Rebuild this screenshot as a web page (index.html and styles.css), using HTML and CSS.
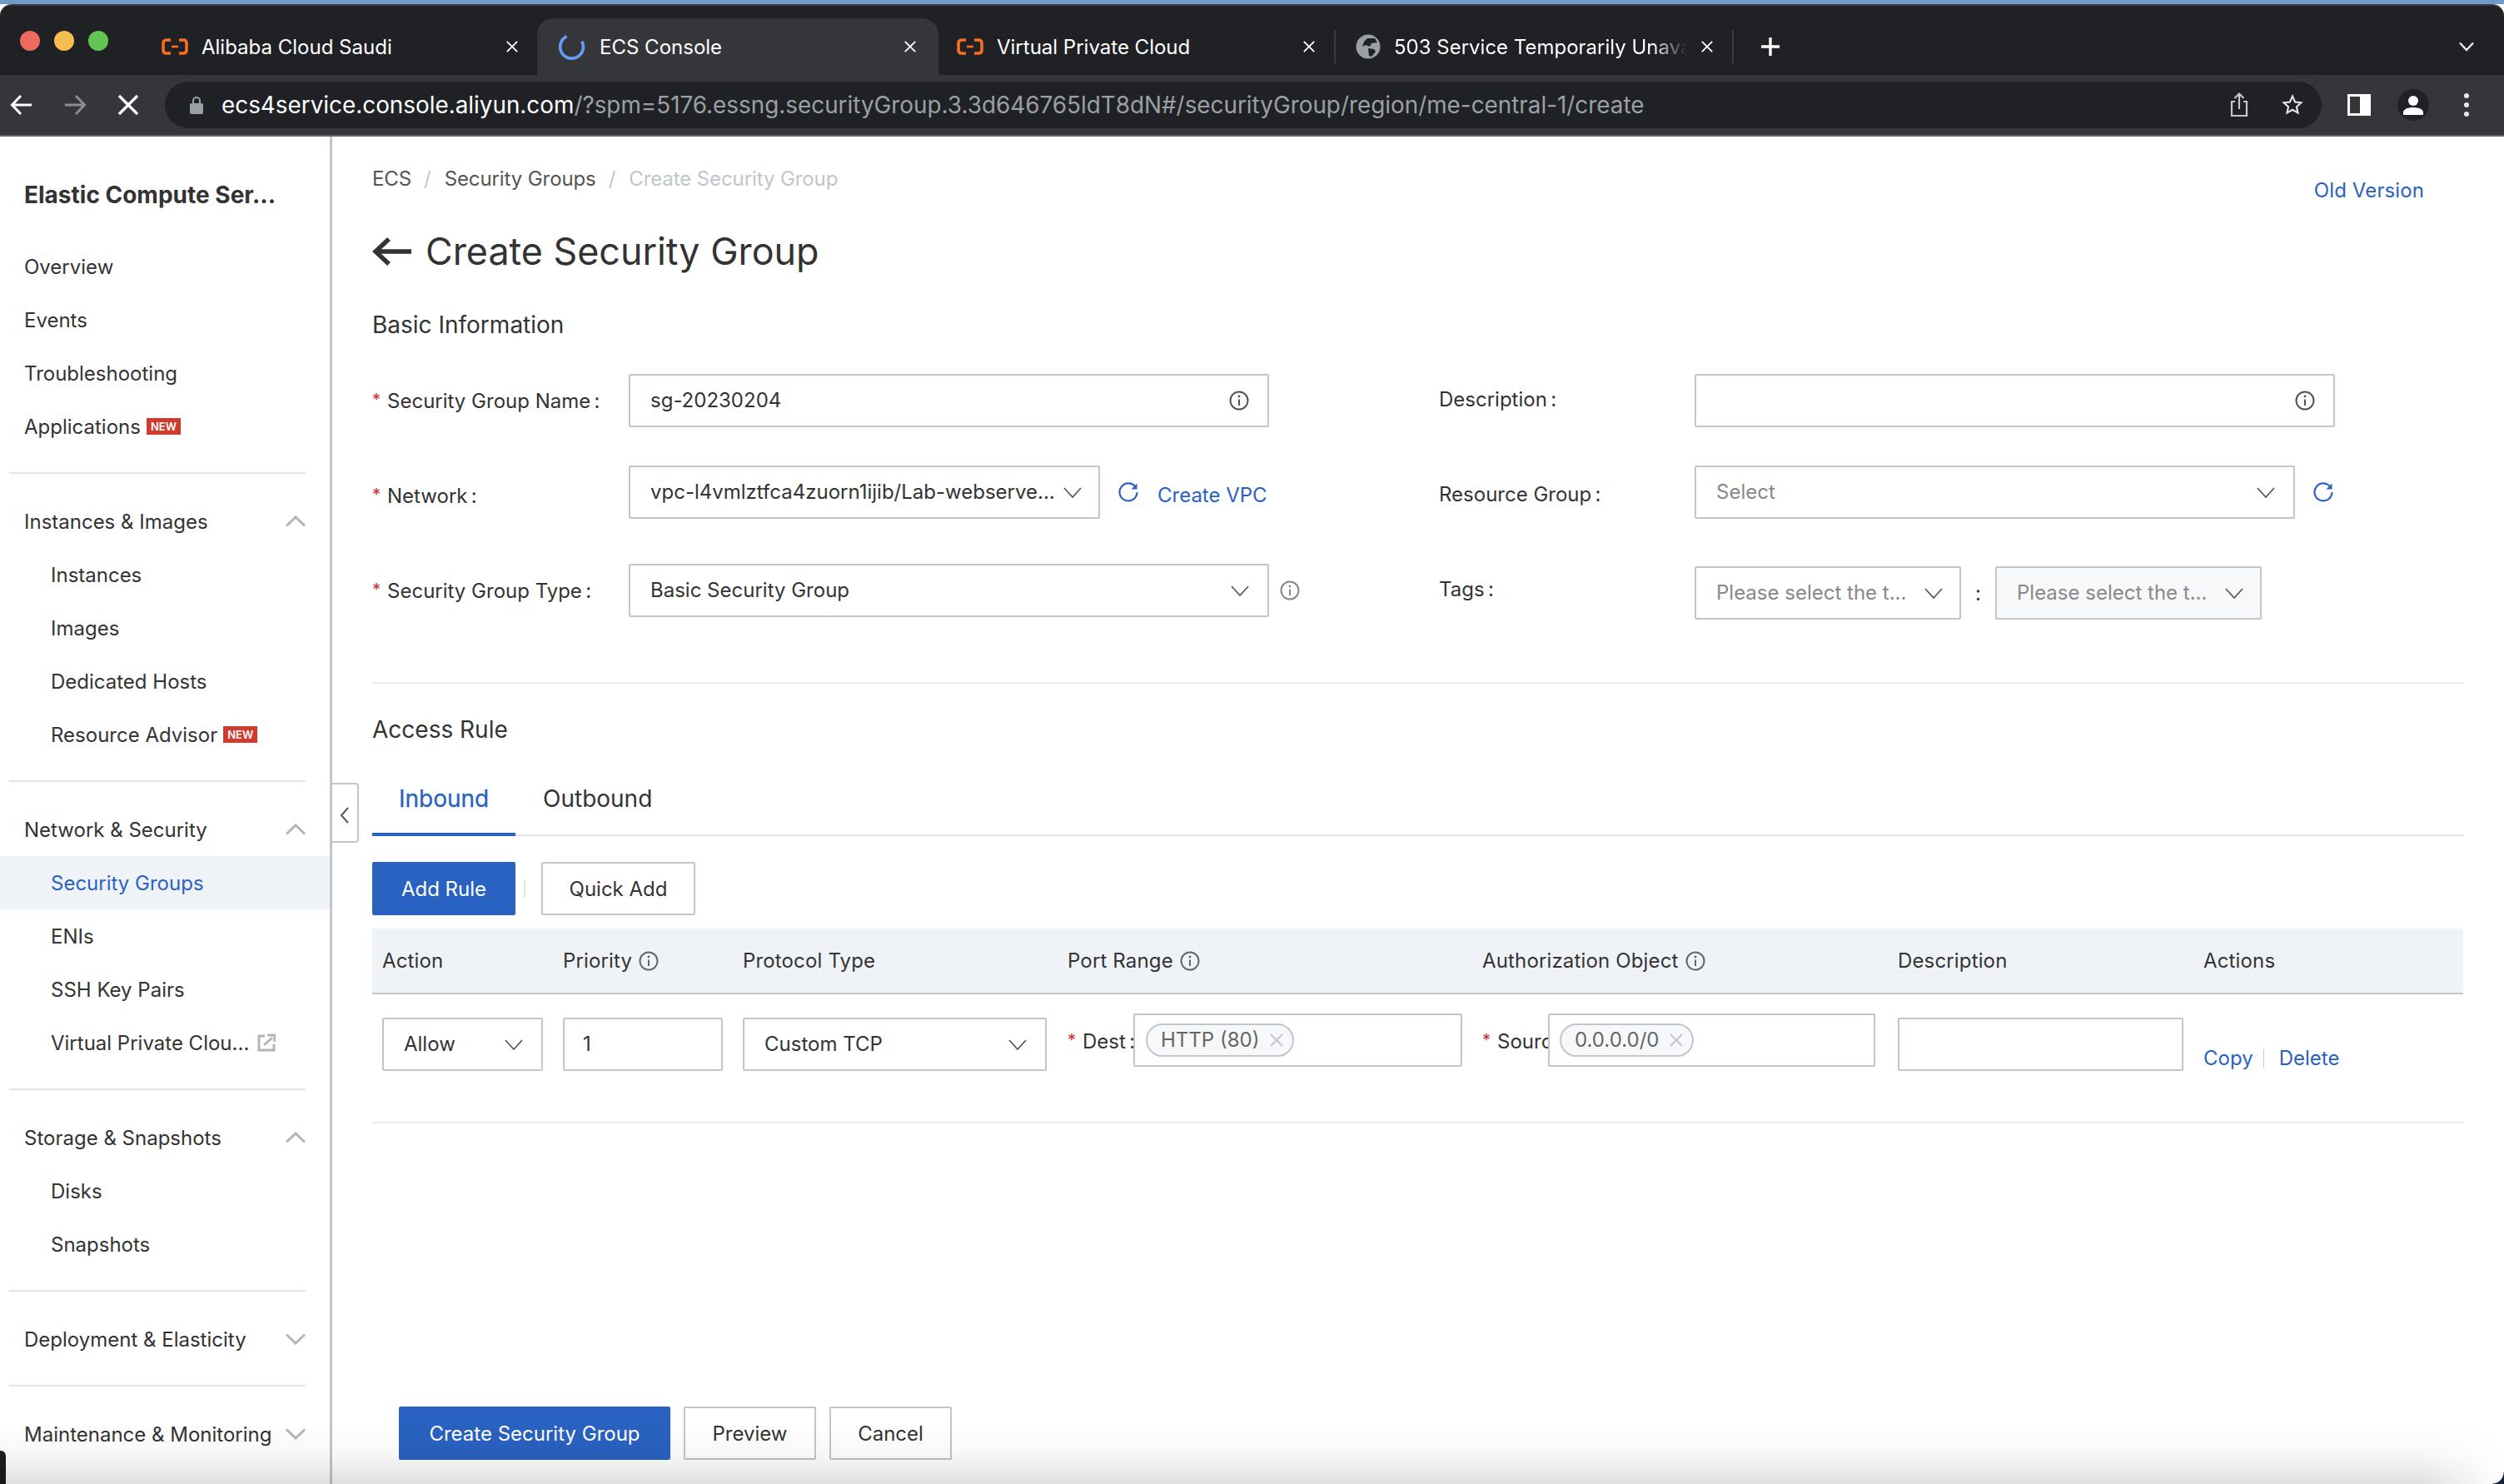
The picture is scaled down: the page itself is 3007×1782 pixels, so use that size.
FILE: index.html
```html
<!DOCTYPE html>
<html>
    <head>
        <meta charset="UTF-8">
        <title>Create Security Group</title>
        <link rel="stylesheet" href="styles.css">
    </head>

    <body>
        <svg class="defs">
            <symbol id="chev-down" viewBox="0 0 22 13"><path d="M1 1 11 12 21 1" fill="none" stroke="currentColor" stroke-width="1.700"/></symbol>
            <symbol id="chev-up" viewBox="0 0 24 14"><path d="M1 12.500 12 2 23 12.500" fill="none" stroke="currentColor" stroke-width="3"/></symbol>
            <symbol id="info" viewBox="0 0 24 24"><circle cx="12" cy="12" r="10.500" fill="none" stroke="currentColor" stroke-width="2"/><path d="M12 10.500v7.500" stroke="currentColor" stroke-width="2"/><circle cx="12" cy="7" r="1.400" fill="currentColor"/></symbol>
            <symbol id="refresh" viewBox="0 0 24 24"><path d="M21 6.500A10.500 10.500 0 1 0 22.500 12" fill="none" stroke="currentColor" stroke-width="2.200"/><path d="M22.500 1.500v7h-7z" fill="currentColor"/></symbol>
            <symbol id="cross" viewBox="0 0 18 18"><path d="M2 2 16 16M16 2 2 16" fill="none" stroke="currentColor" stroke-width="2"/></symbol>
            <symbol id="ali" viewBox="0 0 32 20"><path d="M11 2H6Q2 2 2 6v8q0 4 4 4h5M21 2h5q4 0 4 4v8q0 4-4 4h-5" fill="none" stroke="#f56f23" stroke-width="3.600"/><path d="M12 10h8" stroke="#f56f23" stroke-width="2.600"/></symbol>
        </svg>

        <div class="tabstrip">
            <div class="lights">
                <span class="light light-red"></span>
                <span class="light light-yellow"></span>
                <span class="light light-green"></span>
            </div>
            <div class="tab tab-first">
                <svg class="favicon"><use href="#ali"/></svg>
                <span class="tab-title">Alibaba Cloud Saudi</span>
                <svg class="tab-close"><use href="#cross"/></svg>
            </div>
            <div class="tab tab-active">
                <svg class="spinner" viewBox="0 0 30 30"><path d="M9 3.500A13 13 0 1 0 26 9" fill="none" stroke="#669df6" stroke-width="3.400"/></svg>
                <span class="tab-title">ECS Console</span>
                <svg class="tab-close"><use href="#cross"/></svg>
            </div>
            <div class="tab tab-third">
                <svg class="favicon"><use href="#ali"/></svg>
                <span class="tab-title">Virtual Private Cloud</span>
                <svg class="tab-close"><use href="#cross"/></svg>
            </div>
            <div class="tab tab-fourth">
                <svg class="globe" viewBox="0 0 30 30"><circle cx="15" cy="15" r="14.500" fill="#9aa0a6"/><path d="M14 5h9l3 5-7 1-2 4-5-2-4 2 2-6zM15 17l7 1 2 3-5 6-3-1z" fill="#202124"/></svg>
                <span class="tab-title tab-fade">503 Service Temporarily Unavailable</span>
                <svg class="tab-close"><use href="#cross"/></svg>
            </div>
            <svg class="newtab" viewBox="0 0 24 24"><path d="M12 1v22M1 12h22" stroke="#fff" stroke-width="3.400"/></svg>
            <svg class="tabmenu" viewBox="0 0 18 12"><path d="M1 1.500 9 10l8-8.500" fill="none" stroke="#e8eaed" stroke-width="2.400"/></svg>
        </div>

        <div class="toolbar">
            <svg class="nav-icon" viewBox="0 0 28 28"><path d="M26 14H3M13 3 2.500 14 13 25" fill="none" stroke="#fff" stroke-width="3"/></svg>
            <svg class="nav-icon nav-off" viewBox="0 0 28 28"><path d="M2 14h23M15 3l10.500 11L15 25" fill="none" stroke="#8a8d91" stroke-width="3"/></svg>
            <svg class="nav-icon" viewBox="0 0 28 28"><path d="M3 3 25 25M25 3 3 25" fill="none" stroke="#fff" stroke-width="3.200"/></svg>
            <div class="omnibox">
                <svg class="lock" viewBox="0 0 16 22"><path d="M4 9V6a4 4 0 0 1 8 0v3" fill="none" stroke="#9aa0a6" stroke-width="2"/><rect y="9" width="16" height="13" rx="2" fill="#9aa0a6"/></svg>
                <span class="url"><span class="url-host">ecs4service.console.aliyun.com</span>/?spm=5176.essng.securityGroup.3.3d646765ldT8dN#/securityGroup/region/me-central-1/create</span>
                <svg class="omni-icon omni-share" viewBox="0 0 24 30"><path d="M7 11H3v17h18V11h-4M12 20V2M6.500 7 12 1.500 17.500 7" fill="none" stroke="#c4c7cb" stroke-width="2.200"/></svg>
                <svg class="omni-icon" viewBox="0 0 30 30"><path d="m15 3 3.600 8 8.400.900-6.300 5.700 1.800 8.400-7.500-4.300L7.500 26l1.800-8.400L3 11.900l8.400-.9z" fill="none" stroke="#e8eaed" stroke-width="2.400"/></svg>
            </div>
            <svg class="panel-icon" viewBox="0 0 28 26"><rect x="1.500" y="1.500" width="25" height="23" fill="none" stroke="#fff" stroke-width="3"/><rect x="15" y="2" width="12" height="22" fill="#fff"/></svg>
            <div class="avatar">
                <svg viewBox="0 0 26 26"><circle cx="13" cy="8" r="6" fill="#fff"/><path d="M1 25v-3c0-4 6-6 12-6s12 2 12 6v3z" fill="#fff"/></svg>
            </div>
            <div class="dots"><span></span><span></span><span></span></div>
        </div>

        <div class="page">
            <div class="sidebar">
                <div class="side-title">Elastic Compute Ser...</div>
                <div class="side-group">
                    <div class="side-item">Overview</div>
                    <div class="side-item">Events</div>
                    <div class="side-item">Troubleshooting</div>
                    <div class="side-item">Applications <span class="new-badge">NEW</span></div>
                </div>
                <div class="side-group">
                    <div class="side-item">Instances &amp; Images <svg class="side-chev"><use href="#chev-up"/></svg></div>
                    <div class="side-item side-sub">Instances</div>
                    <div class="side-item side-sub">Images</div>
                    <div class="side-item side-sub">Dedicated Hosts</div>
                    <div class="side-item side-sub">Resource Advisor <span class="new-badge">NEW</span></div>
                </div>
                <div class="side-group">
                    <div class="side-item">Network &amp; Security <svg class="side-chev"><use href="#chev-up"/></svg></div>
                    <div class="side-item side-sub side-current">Security Groups</div>
                    <div class="side-item side-sub">ENIs</div>
                    <div class="side-item side-sub">SSH Key Pairs</div>
                    <div class="side-item side-sub">Virtual Private Clou...
                        <svg class="ext-icon" viewBox="0 0 22 22"><path d="M9 3H2v17h18v-7" fill="none" stroke="#b4b4b4" stroke-width="3"/><path d="M8 14 18 5M12 2h9v8" fill="none" stroke="#b4b4b4" stroke-width="3"/></svg>
                    </div>
                </div>
                <div class="side-group">
                    <div class="side-item">Storage &amp; Snapshots <svg class="side-chev"><use href="#chev-up"/></svg></div>
                    <div class="side-item side-sub">Disks</div>
                    <div class="side-item side-sub">Snapshots</div>
                </div>
                <div class="side-group">
                    <div class="side-item">Deployment &amp; Elasticity <svg class="side-chev side-chev-down"><use href="#chev-up"/></svg></div>
                </div>
                <div class="side-group side-group-last">
                    <div class="side-item">Maintenance &amp; Monitoring <svg class="side-chev side-chev-down"><use href="#chev-up"/></svg></div>
                </div>
            </div>

            <div class="main">
                <div class="collapse">
                    <svg viewBox="0 0 12 22"><path d="M10 2 2 11l8 9" fill="none" stroke="#555" stroke-width="2"/></svg>
                </div>

                <div class="head">
                    <div class="crumbs">
                        <span>ECS</span><span class="crumb-sep">/</span><span>Security Groups</span><span class="crumb-sep">/</span><span class="crumb-last">Create Security Group</span>
                    </div>
                    <a class="old-version">Old Version</a>
                </div>

                <h1 class="page-title">
                    <svg class="back-arrow" viewBox="0 0 48 36"><path d="M47 18H5M20 3 4 18l16 15" fill="none" stroke="#333" stroke-width="5.500"/></svg>
                    Create Security Group
                </h1>

                <h2 class="section-title section-basic">Basic Information</h2>

                <div class="form">
                    <div class="field field-r1">
                        <label class="field-label"><span class="req">*</span>Security Group Name&#8201;:</label>
                        <div class="box box-wide"><span>sg-20230204</span><svg class="box-info"><use href="#info"/></svg></div>
                    </div>
                    <div class="field field-right field-r1">
                        <label class="field-label">Description&#8201;:</label>
                        <div class="box box-wide"><span></span><svg class="box-info"><use href="#info"/></svg></div>
                    </div>

                    <div class="field field-r2">
                        <label class="field-label field-label-low"><span class="req">*</span>Network&#8201;:</label>
                        <div class="box box-network"><span>vpc-l4vmlztfca4zuorn1ijib/Lab-webserve...</span><svg class="box-chev"><use href="#chev-down"/></svg></div>
                        <svg class="refresh"><use href="#refresh"/></svg>
                        <a class="create-vpc">Create VPC</a>
                    </div>
                    <div class="field field-right field-r2">
                        <label class="field-label field-label-low">Resource Group&#8201;:</label>
                        <div class="box box-resource"><span class="placeholder">Select</span><svg class="box-chev"><use href="#chev-down"/></svg></div>
                        <svg class="refresh"><use href="#refresh"/></svg>
                    </div>

                    <div class="field">
                        <label class="field-label"><span class="req">*</span>Security Group Type&#8201;:</label>
                        <div class="box box-wide"><span>Basic Security Group</span><svg class="box-chev"><use href="#chev-down"/></svg></div>
                        <svg class="side-info"><use href="#info"/></svg>
                    </div>
                    <div class="field field-right">
                        <label class="field-label">Tags&#8201;:</label>
                        <div class="tag-row">
                            <div class="box box-tag"><span class="placeholder">Please select the t...</span><svg class="box-chev"><use href="#chev-down"/></svg></div>
                            <span class="tag-colon">:</span>
                            <div class="box box-tag box-off"><span class="placeholder">Please select the t...</span><svg class="box-chev"><use href="#chev-down"/></svg></div>
                        </div>
                    </div>
                </div>

                <div class="rule"></div>

                <h2 class="section-title section-access">Access Rule</h2>

                <div class="tabs">
                    <div class="rule-tab rule-tab-on">Inbound</div>
                    <div class="rule-tab">Outbound</div>
                </div>

                <div class="actions">
                    <button class="btn btn-primary btn-add">Add Rule</button>
                    <span class="actions-sep"></span>
                    <button class="btn btn-quick">Quick Add</button>
                </div>

                <div class="table-head">
                    <div>Action</div>
                    <div>Priority <svg class="th-info"><use href="#info"/></svg></div>
                    <div>Protocol Type</div>
                    <div>Port Range <svg class="th-info"><use href="#info"/></svg></div>
                    <div>Authorization Object <svg class="th-info"><use href="#info"/></svg></div>
                    <div>Description</div>
                    <div>Actions</div>
                </div>

                <div class="table-row">
                    <div class="cell"><div class="box box-action"><span>Allow</span><svg class="box-chev"><use href="#chev-down"/></svg></div></div>
                    <div class="cell"><div class="box box-priority"><span>1</span></div></div>
                    <div class="cell"><div class="box box-protocol"><span>Custom TCP</span><svg class="box-chev"><use href="#chev-down"/></svg></div></div>
                    <div class="cell cell-tagged">
                        <span class="cell-label"><span class="req">*</span>Dest&#8201;:</span>
                        <div class="box box-port"><span class="pill">HTTP (80) <svg class="pill-x"><use href="#cross"/></svg></span></div>
                    </div>
                    <div class="cell cell-tagged">
                        <span class="cell-label"><span class="req">*</span>Source&#8201;:</span>
                        <div class="box box-source"><span class="pill">0.0.0.0/0 <svg class="pill-x"><use href="#cross"/></svg></span></div>
                    </div>
                    <div class="cell"><div class="box box-desc"></div></div>
                    <div class="cell cell-links"><a>Copy</a><span class="link-sep"></span><a>Delete</a></div>
                </div>

                <div class="footer-btns">
                    <button class="btn btn-primary btn-create">Create Security Group</button>
                    <button class="btn btn-preview">Preview</button>
                    <button class="btn btn-cancel">Cancel</button>
                </div>
            </div>
        </div>

        <div class="dock-edge"></div>
        <div class="bottom-shade"></div>
        <div class="corner"></div>
    </body>
</html>
```

FILE: styles.css
```css
* {
    box-sizing: border-box;
}
html, body {
    margin: 0;
    height: 1782px;
    overflow: hidden;
}
body {
    position: relative;
    font-family: Inter, "Liberation Sans", sans-serif;
    font-size: 24px;
    color: #333;
    background: #fff;
    padding-top: 5px;
    background-image: linear-gradient(#6d9ccb 5px, transparent 5px);
}
svg {
    display: block;
    flex: none;
}
.defs {
    width: 0;
    height: 0;
    position: absolute;
}
a {
    color: #2a62c1;
}

/* browser chrome */
.tabstrip {
    height: 85px;
    background: #202124;
    border-top: 2px solid #3c3d40;
    border-radius: 14px 14px 0 0;
    display: flex;
    align-items: flex-end;
    color: #fff;
}
.lights {
    width: 194px;
    height: 68px;
    padding-left: 24px;
    display: flex;
    gap: 17px;
    padding-top: 15px;
}
.light {
    width: 24px;
    height: 24px;
    border-radius: 50%;
}
.light-red {
    background: #ed6a5e;
}
.light-yellow {
    background: #f5bf4f;
}
.light-green {
    background: #62c554;
}
.tab {
    height: 68px;
    display: flex;
    align-items: center;
    font-size: 24px;
    flex: none;
}
.tab-title {
    white-space: nowrap;
}
.tab-first {
    width: 451px;
}
.tab-first .tab-close {
    margin-right: 22px;
}
.tab-active {
    width: 482px;
    background: #35363a;
    border-radius: 20px 20px 0 0;
    padding-left: 26px;
}
.tab-active .tab-close {
    margin-right: 26px;
}
.tab-third {
    width: 477px;
    padding-left: 22px;
    border-right: 2px solid #3c3d40;
    height: 40px;
    margin-bottom: 14px;
}
.tab-third .tab-close {
    margin-right: 22px;
}
.tab-fourth {
    width: 478px;
    padding-left: 24px;
    border-right: 2px solid #3c3d40;
    height: 40px;
    margin-bottom: 14px;
}
.tab-fourth .tab-close {
    margin-right: 22px;
}
.favicon {
    width: 32px;
    height: 20px;
    margin-right: 16px;
}
.spinner {
    width: 32px;
    height: 32px;
    margin-right: 17px;
}
.globe {
    width: 30px;
    height: 30px;
    margin-right: 16px;
}
.tab-close {
    width: 16px;
    height: 16px;
    margin-left: auto;
    color: #fff;
}
.tab-fade {
    width: 352px;
    overflow: hidden;
    -webkit-mask-image: linear-gradient(to right, #000 88%, transparent);
    mask-image: linear-gradient(to right, #000 88%, transparent);
}
.newtab {
    width: 24px;
    height: 24px;
    margin: 0 0 22px 32px;
}
.tabmenu {
    width: 18px;
    height: 12px;
    margin: 0 36px 28px auto;
}
.toolbar {
    height: 74px;
    background: #35363a;
    border-bottom: 2px solid #5f6368;
    display: flex;
    align-items: center;
    padding-left: 12px;
}
.nav-icon {
    width: 28px;
    height: 28px;
    margin-right: 36px;
}
.omnibox {
    width: 2590px;
    height: 56px;
    margin-left: -6px;
    background: #202124;
    border-radius: 28px;
    display: flex;
    align-items: center;
    padding-left: 30px;
    flex: none;
}
.lock {
    width: 16px;
    height: 22px;
    margin-right: 22px;
}
.url {
    font-size: 27.850px;
    color: #9aa0a6;
    white-space: nowrap;
    width: 2410px;
    flex: none;
}
.url-host {
    color: #fff;
}
.omni-icon {
    width: 26px;
    height: 30px;
}
.omni-share {
    margin-right: 38px;
}
.panel-icon {
    width: 28px;
    height: 26px;
    margin-left: 31px;
}
.avatar {
    width: 38px;
    height: 38px;
    border-radius: 50%;
    background: #202124;
    margin-left: 32px;
    display: flex;
    align-items: center;
    justify-content: center;
}
.avatar svg {
    width: 26px;
    height: 26px;
}
.dots {
    margin-left: 42px;
    display: flex;
    flex-direction: column;
    gap: 5px;
}
.dots span {
    width: 6px;
    height: 6px;
    border-radius: 50%;
    background: #e8eaed;
}

/* page */
.page {
    display: flex;
    height: 1618px;
}
.sidebar {
    width: 399px;
    flex: none;
    border-right: 3px solid #c0c6cc;
    overflow: hidden;
}
.side-title {
    font-size: 28px;
    font-weight: 700;
    line-height: 36px;
    padding: 52px 0 0 29px;
    height: 124px;
    white-space: nowrap;
}
.side-group {
    border-bottom: 2px solid #e3e5e8;
    margin: 0 29px 25px 11px;
    padding-bottom: 23px;
}
.side-group-last {
    border-bottom: 0;
}
.side-item {
    height: 64px;
    margin: 0 -29px 0 -11px;
    padding: 0 29px;
    display: flex;
    align-items: center;
    white-space: nowrap;
}
.side-sub {
    padding-left: 61px;
}
.side-current {
    background: #eff3f8;
    color: #2a62c1;
}
.side-chev {
    width: 24px;
    height: 14px;
    margin-left: auto;
    color: #b4b4b4;
}
.side-chev-down {
    transform: scaleY(-1);
}
.new-badge {
    width: 41px;
    height: 20px;
    margin-left: 7px;
    background: #cf3b2e;
    color: #fff;
    font-size: 13px;
    font-weight: 600;
    line-height: 20px;
    text-align: center;
}
.ext-icon {
    width: 22px;
    height: 22px;
    margin-left: 10px;
}
.main {
    flex: 1;
    position: relative;
    padding: 35px 49px 0 48px;
    min-width: 0;
}
.collapse {
    position: absolute;
    left: 0;
    top: 776px;
    width: 32px;
    height: 72px;
    padding-top: 6px;
    background: #fff;
    border: 2px solid #c0c6cc;
    border-left: 0;
    border-radius: 0 4px 4px 0;
    display: flex;
    align-items: center;
    justify-content: center;
}
.collapse svg {
    width: 12px;
    height: 22px;
}
.head {
    display: flex;
    justify-content: space-between;
    align-items: flex-start;
}
.crumbs {
    display: flex;
    line-height: 32px;
    color: #555;
    letter-spacing: -0.1px;
}
.crumb-sep {
    color: #c0c6cc;
    margin: 0 16px 0 15px;
}
.crumb-last {
    color: #c0c6cc;
}
.old-version {
    margin: 14px 47px 0 0;
    line-height: 32px;
    letter-spacing: 0.1px;
}
.page-title {
    margin: 27px 0 0;
    display: flex;
    align-items: center;
    font-size: 44.800px;
    font-weight: 400;
    line-height: 60px;
}
.back-arrow {
    width: 48px;
    height: 36px;
    margin-right: 16px;
}
.section-title {
    margin: 0;
    font-size: 28px;
    font-weight: 400;
    line-height: 36px;
}
.section-basic {
    margin-top: 40px;
}
.section-access {
    margin-top: 37px;
}

/* form */
.form {
    margin-top: 41px;
    display: grid;
    grid-template-columns: 1281px 1fr;
}
.field {
    display: flex;
    align-items: flex-start;
}
.field-r1 {
    height: 110px;
}
.field-r2 {
    height: 118px;
}
.field-label {
    width: 308px;
    flex: none;
    line-height: 32px;
    margin-top: 15px;
    white-space: nowrap;
}
.field-right .field-label {
    width: 307px;
}
.field-label-low {
    margin-top: 19px;
}
.req {
    color: #c9302c;
    margin-right: 8px;
    font-size: 20px;
    vertical-align: 3px;
}
.box {
    height: 64px;
    border: 2px solid #c0c6cc;
    border-radius: 2px;
    background: #fff;
    display: flex;
    align-items: center;
    padding-left: 24px;
    padding-right: 22px;
    justify-content: space-between;
    flex: none;
    white-space: nowrap;
    line-height: 32px;
}
.box-wide {
    width: 769px;
}
.box-network {
    width: 566px;
    padding-right: 20px;
}
.box-resource {
    width: 721px;
}
.box-tag {
    width: 320px;
    padding-right: 20px;
}
.box-off {
    background: #f7f8fa;
}
.placeholder {
    color: #888;
}
.box-info {
    width: 24px;
    height: 24px;
    color: #555;
}
.box-chev {
    width: 22px;
    height: 13px;
    color: #555;
}
.refresh {
    width: 24px;
    height: 24px;
    color: #2a62c1;
    margin: 20px 0 0 22px;
}
.create-vpc {
    margin: 20px 0 0 23px;
    line-height: 32px;
    white-space: nowrap;
}
.side-info {
    width: 24px;
    height: 24px;
    color: #888;
    margin: 20px 0 0 13px;
}
.tag-row {
    display: flex;
    align-items: center;
    margin-top: 3px;
}
.tag-colon {
    width: 41px;
    text-align: center;
}
.rule {
    border-top: 2px solid #e8eaec;
    margin-top: 75px;
    height: 2px;
}

/* access rule */
.tabs {
    display: flex;
    height: 88px;
    margin-top: 22px;
    border-bottom: 2px solid #e3e5e8;
}
.rule-tab {
    height: 88px;
    padding: 8px 32px 0 33px;
    font-size: 28px;
    line-height: 70px;
    border-bottom: 4px solid transparent;
}
.rule-tab-on {
    width: 172px;
    padding-left: 32px;
    color: #2a62c1;
    border-bottom-color: #2a62c1;
    -webkit-text-stroke: 0.3px #2a62c1;
}
.actions {
    display: flex;
    align-items: center;
    margin-top: 31px;
}
.btn {
    height: 64px;
    font-family: inherit;
    font-size: 24px;
    color: #333;
    background: #fff;
    border: 2px solid #c0c6cc;
    border-radius: 2px;
    padding: 0;
    flex: none;
}
.btn-primary {
    background: #2a62c1;
    border-color: #2a62c1;
    color: #fff;
}
.btn-add {
    width: 172px;
}
.actions-sep {
    width: 2px;
    height: 22px;
    margin: 0 19px 0 10px;
    background: #e3e5e8;
}
.btn-quick {
    width: 185px;
}
.table-head, .table-row {
    display: grid;
    grid-template-columns: 217px 216px 390px 498px 499px 367px 1fr;
    padding-left: 12px;
}
.table-head {
    margin-top: 16px;
    height: 79px;
    align-items: center;
    background: #eff3f8;
    border-bottom: 2px solid #c0c6cc;
    white-space: nowrap;
    letter-spacing: 0.15px;
}
.table-head div {
    display: flex;
    align-items: center;
    gap: 8px;
}
.th-info {
    width: 24px;
    height: 24px;
    color: #666;
}
.table-row {
    height: 155px;
    border-bottom: 2px solid #e8eaec;
}
.cell {
    padding-top: 28px;
    display: flex;
    align-items: flex-start;
}
.box-action {
    width: 193px;
}
.box-priority {
    width: 192px;
    padding-left: 22px;
}
.box-protocol {
    width: 365px;
}
.cell-tagged {
    padding-top: 23px;
}
.cell-label {
    width: 79px;
    flex: none;
    overflow: hidden;
    white-space: nowrap;
    line-height: 32px;
    margin-top: 16px;
}
.box-port {
    width: 395px;
    padding-left: 13px;
}
.box-source {
    width: 393px;
    padding-left: 12px;
}
.box-desc {
    width: 343px;
}
.pill {
    height: 40px;
    padding: 0 10px 0 16px;
    border: 2px solid #c0c6cc;
    border-radius: 20px;
    background: #f7f8fa;
    color: #666;
    display: flex;
    align-items: center;
    gap: 12px;
    line-height: 36px;
}
.pill-x {
    width: 18px;
    height: 18px;
    color: #c0c6cc;
}
.cell-links {
    padding-top: 61px;
    line-height: 32px;
}
.link-sep {
    width: 1px;
    height: 22px;
    background: #c0c6cc;
    margin: 5px 18px 0 12px;
}
.footer-btns {
    display: flex;
    gap: 16px;
    margin-top: 340px;
    padding-left: 32px;
}
.btn-create {
    width: 326px;
}
.btn-preview {
    width: 159px;
}
.btn-cancel {
    width: 147px;
}

/* screenshot edges */
.dock-edge {
    position: absolute;
    left: 0;
    top: 1742px;
    width: 7px;
    height: 40px;
    background: #1d1d1f;
    border-radius: 0 6px 0 0;
}
.bottom-shade {
    position: absolute;
    left: 0;
    right: 0;
    bottom: 0;
    height: 72px;
    background: linear-gradient(rgba(0, 0, 0, 0), rgba(0, 0, 0, 0.03) 50%, rgba(0, 0, 0, 0.12));
    -webkit-mask-image: linear-gradient(to left, transparent, #000 100px);
    mask-image: linear-gradient(to left, transparent, #000 100px);
}
.corner {
    position: absolute;
    right: 0;
    bottom: 0;
    width: 14px;
    height: 14px;
    background: radial-gradient(circle at 0 0, transparent 13px, #14233a 14px);
}
```
